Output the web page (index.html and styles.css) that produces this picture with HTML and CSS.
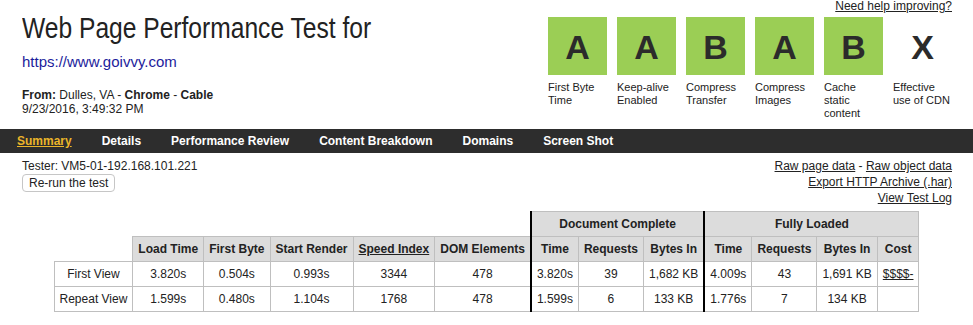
FILE: index.html
```html
<!DOCTYPE html>
<html lang="en">

<head>
    <meta charset="UTF-8">
    <meta name="viewport" content="width=device-width, initial-scale=1.0">
    <title>Web Page Performance Test</title>
    <link rel="stylesheet" href="styles.css">
</head>

<body>
    <div class="header">
        <div class="test-info">
            <h1 class="title">Web Page Performance Test for</h1>
            <a href="#" class="url">https://www.goivvy.com</a>
            <div class="from"><b>From:</b> Dulles, VA - <b>Chrome</b> - <b>Cable</b></div>
            <div class="date">9/23/2016, 3:49:32 PM</div>
        </div>
        <div class="grades">
            <a href="#" class="help">Need help improving?</a>
            <ul class="grade-list">
                <li><div class="grade">A</div><div class="grade-label">First Byte Time</div></li>
                <li><div class="grade">A</div><div class="grade-label">Keep-alive Enabled</div></li>
                <li><div class="grade">B</div><div class="grade-label">Compress Transfer</div></li>
                <li><div class="grade">A</div><div class="grade-label">Compress Images</div></li>
                <li><div class="grade">B</div><div class="grade-label">Cache static content</div></li>
                <li><div class="grade none">X</div><div class="grade-label">Effective use of CDN</div></li>
            </ul>
        </div>
    </div>

    <ul class="tabs">
        <li><a href="#" class="current">Summary</a></li>
        <li><a href="#">Details</a></li>
        <li><a href="#">Performance Review</a></li>
        <li><a href="#">Content Breakdown</a></li>
        <li><a href="#">Domains</a></li>
        <li><a href="#">Screen Shot</a></li>
    </ul>

    <div class="sub-bar">
        <div class="tester">
            <div>Tester: VM5-01-192.168.101.221</div>
            <button class="rerun">Re-run the test</button>
        </div>
        <div class="raw-links">
            <div><a href="#">Raw page data</a> - <a href="#">Raw object data</a></div>
            <div><a href="#">Export HTTP Archive (.har)</a></div>
            <div><a href="#">View Test Log</a></div>
        </div>
    </div>

    <table class="results">
        <tr>
            <th colspan="6" class="blank"></th>
            <th colspan="3" class="group">Document Complete</th>
            <th colspan="4" class="group">Fully Loaded</th>
        </tr>
        <tr>
            <th class="blank"></th>
            <th>Load Time</th>
            <th>First Byte</th>
            <th>Start Render</th>
            <th><a href="#">Speed Index</a></th>
            <th>DOM Elements</th>
            <th class="group">Time</th>
            <th>Requests</th>
            <th>Bytes In</th>
            <th class="group">Time</th>
            <th>Requests</th>
            <th>Bytes In</th>
            <th>Cost</th>
        </tr>
        <tr>
            <td>First View</td>
            <td>3.820s</td>
            <td>0.504s</td>
            <td>0.993s</td>
            <td>3344</td>
            <td>478</td>
            <td class="group">3.820s</td>
            <td>39</td>
            <td>1,682 KB</td>
            <td class="group">4.009s</td>
            <td>43</td>
            <td>1,691 KB</td>
            <td><a href="#">$$$$-</a></td>
        </tr>
        <tr>
            <td>Repeat View</td>
            <td>1.599s</td>
            <td>0.480s</td>
            <td>1.104s</td>
            <td>1768</td>
            <td>478</td>
            <td class="group">1.599s</td>
            <td>6</td>
            <td>133 KB</td>
            <td class="group">1.776s</td>
            <td>7</td>
            <td>134 KB</td>
            <td></td>
        </tr>
    </table>
</body>

</html>
```

FILE: styles.css
```css
* {
    margin: 0;
    padding: 0;
    box-sizing: border-box;
}

body {
    font-family: "Liberation Sans", Arial, sans-serif;
    font-size: 12px;
    color: #222;
    background: #fff;
}

a {
    color: #222;
}

ul {
    list-style: none;
}

.header {
    display: flex;
    justify-content: space-between;
    height: 129px;
}

.test-info {
    padding-left: 22px;
}

/* the original title face is a narrow one, squeeze Arial to match */
.title {
    margin-top: 11px;
    font-size: 30px;
    line-height: 34px;
    font-weight: normal;
    color: #222;
    white-space: nowrap;
    transform: scaleX(0.82);
    transform-origin: left center;
}

.url {
    display: block;
    margin-top: 8px;
    font-size: 15px;
    line-height: 18px;
    color: #1c1c9c;
    text-decoration: none;
}

.from {
    margin-top: 17px;
    line-height: 14px;
}

.date {
    line-height: 14px;
}

.grades {
    padding-right: 21px;
    text-align: right;
}

.help {
    display: block;
    line-height: 13px;
}

.grade-list {
    display: flex;
    gap: 10px;
    margin-top: 4px;
    text-align: left;
}

.grade-list li {
    width: 59px;
}

.grade {
    height: 58px;
    padding-top: 3px;
    line-height: 55px;
    text-align: center;
    font-size: 34px;
    font-weight: bold;
    color: #2b2b2b;
    background: #9bce55;
}

.grade.none {
    background: none;
}

.grade-label {
    margin-top: 6px;
    font-size: 11px;
    line-height: 13px;
}

.tabs {
    display: flex;
    gap: 30px;
    height: 24px;
    padding-left: 17px;
    background: #2d2d2d;
}

.tabs a {
    line-height: 24px;
    font-weight: bold;
    color: #fff;
    text-decoration: none;
}

.tabs a.current {
    color: #ebb52a;
    text-decoration: underline;
}

.sub-bar {
    display: flex;
    justify-content: space-between;
    padding: 5px 21px 0 22px;
    line-height: 16px;
}

.rerun {
    height: 18px;
    padding: 0 6px;
    font-family: "Liberation Sans", Arial, sans-serif;
    font-size: 12px;
    line-height: 16px;
    color: #222;
    background: #fff;
    border: 1px solid #c6c6c6;
    border-radius: 4px;
}

.raw-links {
    text-align: right;
}

.results {
    margin: 5px auto 0;
    border-collapse: collapse;
}

.results th,
.results td {
    height: 25px;
    padding: 0 5px;
    border: 1px solid #bfbfbf;
    text-align: center;
    white-space: nowrap;
}

.results th {
    background: #dcdcdc;
}

.results th.blank {
    background: none;
    border: none;
}

.results .group {
    border-left: 2px solid #000;
}
```
